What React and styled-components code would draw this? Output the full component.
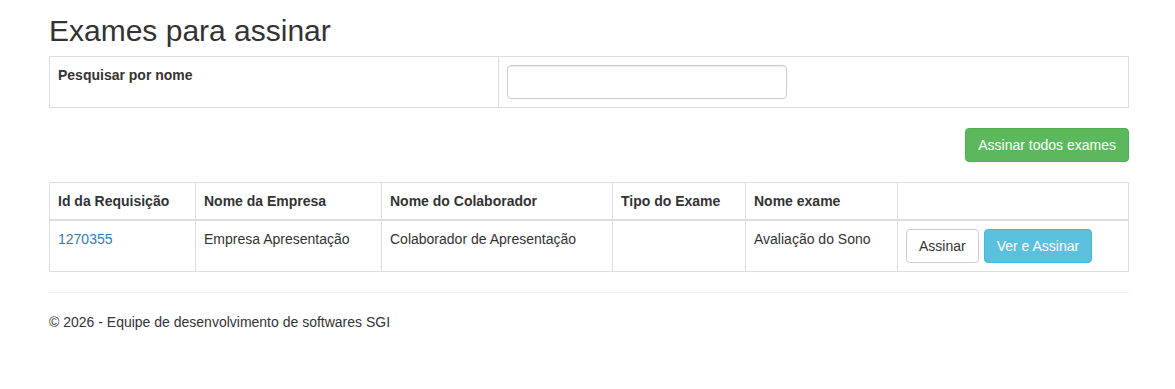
import React from 'react';
import styled, { createGlobalStyle } from 'styled-components';

const GlobalStyle = createGlobalStyle`
    * {
        box-sizing: border-box;
    }

    body {
        margin: 0;
        font-family: "Liberation Sans", Arial, Helvetica, sans-serif;
        font-size: 14px;
        line-height: 1.42857;
        color: #333;
        background: #fff;
    }
`;

const Page = styled.div`
    padding: 0 46px 0 49px;
`;

const Title = styled.h2`
    margin: 14px 0 9px;
    font-size: 30px;
    font-weight: 500;
    line-height: 33px;
    color: #333;
`;

const Table = styled.table`
    width: 100%;
    border-collapse: collapse;
    border-spacing: 0;
    table-layout: fixed;
    border: 1px solid #ddd;
    margin-top: ${props => props.$top || 0}px;

    th, td {
        border: 1px solid #ddd;
        padding: 8px;
        vertical-align: top;
        text-align: left;
        line-height: 20px;
    }

    th {
        font-weight: bold;
        vertical-align: bottom;
    }

    thead th {
        border-bottom-width: 2px;
    }
`;

const Label = styled.span`
    font-weight: bold;
`;

const Input = styled.input`
    display: block;
    width: 280px;
    height: 34px;
    padding: 6px 12px;
    font-size: 14px;
    font-family: inherit;
    color: #555;
    background: #fff;
    border: 1px solid #ccc;
    border-radius: 4px;
    box-shadow: inset 0 1px 1px rgba(0, 0, 0, 0.075);
    outline: none;
`;

const Toolbar = styled.div`
    display: flex;
    justify-content: flex-end;
    margin-top: 20px;
`;

const variants = {
    success: { bg: '#5cb85c', border: '#4cae4c', color: '#fff' },
    info: { bg: '#5bc0de', border: '#46b8da', color: '#fff' },
    default: { bg: '#fff', border: '#ccc', color: '#333' },
};

const Button = styled.button`
    display: inline-block;
    height: 34px;
    padding: 6px 12px;
    font-family: inherit;
    font-size: 14px;
    line-height: 20px;
    border-radius: 4px;
    cursor: pointer;
    white-space: nowrap;
    background: ${props => variants[props.$variant].bg};
    border: 1px solid ${props => variants[props.$variant].border};
    color: ${props => variants[props.$variant].color};
`;

const Actions = styled.div`
    display: flex;
    gap: 5px;
`;

const IdLink = styled.a`
    color: #337ab7;
    text-decoration: none;
`;

const Rule = styled.hr`
    margin: 20px 0;
    border: 0;
    border-top: 1px solid #eee;
`;

const Footer = styled.p`
    margin: 0;
`;

const columns = [
    { title: 'Id da Requisição', width: 146 },
    { title: 'Nome da Empresa', width: 186 },
    { title: 'Nome do Colaborador', width: 231 },
    { title: 'Tipo do Exame', width: 133 },
    { title: 'Nome exame', width: 152 },
    { title: '', width: null },
];

const exames = [
    {
        id: '1270355',
        empresa: 'Empresa Apresentação',
        colaborador: 'Colaborador de Apresentação',
        tipo: '',
        nome: 'Avaliação do Sono',
    },
];

export default function App() {
    return (
        <>
            <GlobalStyle />
            <Page>
                <Title>Exames para assinar</Title>
                <Table>
                    <colgroup>
                        <col style={{ width: 449 }} />
                        <col />
                    </colgroup>
                    <tbody>
                        <tr>
                            <td><Label>Pesquisar por nome</Label></td>
                            <td><Input type="text" /></td>
                        </tr>
                    </tbody>
                </Table>

                <Toolbar>
                    <Button $variant="success">Assinar todos exames</Button>
                </Toolbar>

                <Table $top={20}>
                    <colgroup>
                        {columns.map((c, i) => (
                            <col key={i} style={c.width ? { width: c.width } : undefined} />
                        ))}
                    </colgroup>
                    <thead>
                        <tr>
                            {columns.map((c, i) => <th key={i}>{c.title}</th>)}
                        </tr>
                    </thead>
                    <tbody>
                        {exames.map(e => (
                            <tr key={e.id}>
                                <td><IdLink href="#">{e.id}</IdLink></td>
                                <td>{e.empresa}</td>
                                <td>{e.colaborador}</td>
                                <td>{e.tipo}</td>
                                <td>{e.nome}</td>
                                <td>
                                    <Actions>
                                        <Button $variant="default">Assinar</Button>
                                        <Button $variant="info">Ver e Assinar</Button>
                                    </Actions>
                                </td>
                            </tr>
                        ))}
                    </tbody>
                </Table>

                <Rule />
                <Footer>© 2026 - Equipe de desenvolvimento de softwares SGI</Footer>
            </Page>
        </>
    );
}
